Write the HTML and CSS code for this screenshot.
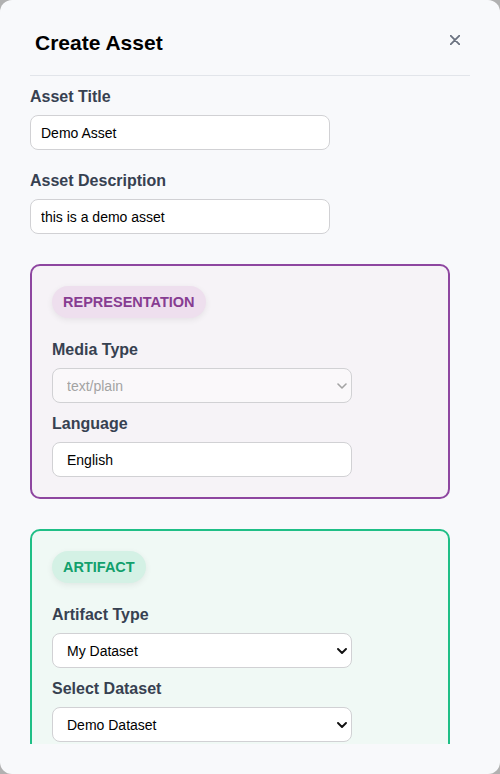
FILE: index.html
```html
<!DOCTYPE html>
<html lang="en">
<head>
<meta charset="utf-8">
<title>Create Asset</title>
<link rel="stylesheet" href="styles.css">
</head>
<body>
<div class="modal">
  <header class="modal-header">
    <h2 class="modal-title">Create Asset</h2>
    <button class="close-btn" type="button" aria-label="Close">
      <svg width="10" height="10" viewBox="0 0 10 10"><path d="M0.5 0.5 L9.5 9.5 M9.5 0.5 L0.5 9.5" stroke="#6b7280" stroke-width="1.8" stroke-linecap="round" fill="none"/></svg>
    </button>
  </header>
  <div class="modal-body">
    <div class="field field-outer">
      <label class="field-label">Asset Title</label>
      <input class="text-input" type="text" value="Demo Asset">
    </div>
    <div class="field field-outer">
      <label class="field-label">Asset Description</label>
      <input class="text-input" type="text" value="this is a demo asset">
    </div>

    <section class="group group-rep">
      <span class="pill pill-rep">REPRESENTATION</span>
      <div class="field field-inner">
        <label class="field-label">Media Type</label>
        <div class="select-wrap">
          <select class="text-input inner-input select-input select-disabled" disabled><option>text/plain</option></select>
          <svg class="chev" width="10" height="6" viewBox="0 0 10 6"><path d="M1 1 L5 5 L9 1" stroke="#a3a3a3" stroke-width="1.6" fill="none" stroke-linecap="round" stroke-linejoin="round"/></svg>
        </div>
      </div>
      <div class="field field-inner">
        <label class="field-label">Language</label>
        <input class="text-input inner-input" type="text" value="English">
      </div>
    </section>

    <section class="group group-art">
      <span class="pill pill-art">ARTIFACT</span>
      <div class="field field-inner">
        <label class="field-label">Artifact Type</label>
        <div class="select-wrap">
          <select class="text-input inner-input select-input"><option>My Dataset</option></select>
          <svg class="chev" width="10" height="6" viewBox="0 0 10 6"><path d="M1 1 L5 5 L9 1" stroke="#111" stroke-width="1.9" fill="none" stroke-linecap="round" stroke-linejoin="round"/></svg>
        </div>
      </div>
      <div class="field field-inner">
        <label class="field-label">Select Dataset</label>
        <div class="select-wrap">
          <select class="text-input inner-input select-input"><option>Demo Dataset</option></select>
          <svg class="chev" width="10" height="6" viewBox="0 0 10 6"><path d="M1 1 L5 5 L9 1" stroke="#111" stroke-width="1.9" fill="none" stroke-linecap="round" stroke-linejoin="round"/></svg>
        </div>
      </div>
    </section>
  </div>
</div>
</body>
</html>
```
FILE: styles.css
```css
html, body {
  margin: 0;
  padding: 0;
}
body {
  background: #b1b1b1;
  font-family: "Liberation Sans", Arial, sans-serif;
}
.modal {
  width: 500px;
  height: 774px;
  box-sizing: border-box;
  background: #f8f9fb;
  border-radius: 12px;
  padding: 0 30px 30px;
  display: flex;
  flex-direction: column;
  overflow: hidden;
}
.modal-header {
  display: flex;
  justify-content: space-between;
  align-items: flex-start;
  padding: 30px 10px 0 5px;
  height: 76px;
  box-sizing: border-box;
  border-bottom: 1px solid #e2e5ea;
  flex: none;
}
.modal-title {
  margin: 0;
  font-size: 21px;
  line-height: 26px;
  font-weight: 700;
  color: #000;
}
.close-btn {
  margin-top: 5px;
  padding: 0;
  border: 0;
  background: transparent;
  width: 10px;
  height: 10px;
  display: flex;
}
.modal-body {
  flex: 1;
  overflow: hidden;
  padding-top: 10px;
  display: flex;
  flex-direction: column;
  align-items: flex-start;
}
.field {
  display: flex;
  flex-direction: column;
  align-items: flex-start;
}
.field-outer {
  margin-bottom: 20px;
}
.field-inner + .field-inner {
  margin-top: 10px;
}
.field-label {
  font-size: 16px;
  line-height: 20px;
  font-weight: 700;
  color: #374151;
  padding-top: 1px;
  margin-bottom: 8px;
}
.text-input {
  width: 300px;
  height: 35px;
  box-sizing: border-box;
  border: 1px solid #d1d1d4;
  border-radius: 8px;
  background: #fff;
  padding: 0 10px;
  font-family: "Liberation Sans", Arial, sans-serif;
  font-size: 14px;
  color: #000;
  outline: none;
  margin: 0;
}
.inner-input {
  padding: 0 14px;
}
.select-wrap {
  position: relative;
  width: 300px;
  height: 35px;
}
.select-input {
  appearance: none;
  -webkit-appearance: none;
  display: block;
}
.select-disabled {
  background: #faf8fa;
  color: #a3a3a3;
  opacity: 1;
}
.chev {
  position: absolute;
  right: 5px;
  top: 15px;
  pointer-events: none;
}
.group {
  width: 420px;
  box-sizing: border-box;
  border: 2px solid;
  border-radius: 10px;
  padding: 20px;
  margin: 0 0 30px;
  display: flex;
  flex-direction: column;
  align-items: flex-start;
  flex: none;
}
.group-rep {
  margin-top: 10px;
  border-color: #8e46a0;
  background: #f6f3f7;
}
.group-art {
  border-color: #1fbf86;
  background: #f0f9f5;
}
.pill {
  display: inline-block;
  font-size: 14.5px;
  line-height: 18px;
  font-weight: 700;
  padding: 7px 11px;
  border-radius: 16px;
  margin-bottom: 21px;
  box-shadow: 0 2px 6px rgba(0, 0, 0, 0.07);
}
.pill-rep {
  background: #eedfee;
  color: #873c91;
}
.pill-art {
  background: #d4f1e5;
  color: #12a06c;
}
```
